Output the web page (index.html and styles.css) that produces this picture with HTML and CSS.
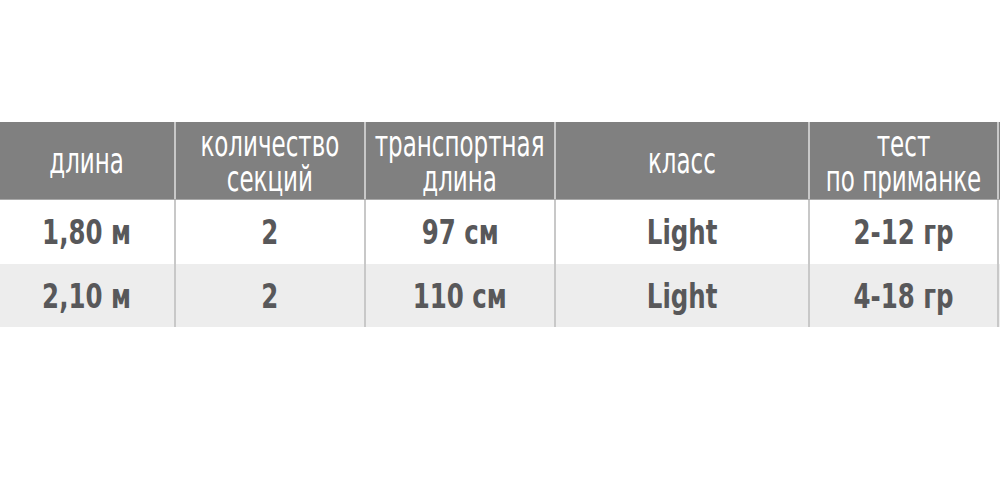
FILE: index.html
```html
<!DOCTYPE html>
<html lang="ru">
<head>
<meta charset="utf-8">
<link rel="stylesheet" href="styles.css">
</head>
<body>
<div class="page">
  <div class="table">
    <div class="row head">
      <div class="cell"><span class="t">длина</span></div>
      <div class="cell"><span class="t">количество<br>секций</span></div>
      <div class="cell"><span class="t">транспортная<br>длина</span></div>
      <div class="cell"><span class="t">класс</span></div>
      <div class="cell"><span class="t">тест<br>по приманке</span></div>
      <div class="cell"></div>
    </div>
    <div class="row body odd">
      <div class="cell"><span class="t">1,80 м</span></div>
      <div class="cell"><span class="t">2</span></div>
      <div class="cell"><span class="t">97 см</span></div>
      <div class="cell"><span class="t">Light</span></div>
      <div class="cell"><span class="t">2-12 гр</span></div>
      <div class="cell"></div>
    </div>
    <div class="row body even">
      <div class="cell"><span class="t">2,10 м</span></div>
      <div class="cell"><span class="t">2</span></div>
      <div class="cell"><span class="t">110 см</span></div>
      <div class="cell"><span class="t">Light</span></div>
      <div class="cell"><span class="t">4-18 гр</span></div>
      <div class="cell"></div>
    </div>
  </div>
</div>
</body>
</html>
```
FILE: styles.css
```css
html, body {
  margin: 0;
  padding: 0;
  background: #ffffff;
}
.page {
  width: 1000px;
  height: 490px;
  overflow: hidden;
  padding-top: 122px;
  box-sizing: border-box;
}
.table {
  width: 1000px;
  display: flex;
  flex-direction: column;
  font-family: "DejaVu Sans Condensed", "DejaVu Sans", sans-serif;
  font-stretch: condensed;
}
.row {
  display: grid;
  grid-template-columns: 174px 188px 188px 252px 187px 1fr;
  column-gap: 2px;
  background: #c8c8c8;
}
.cell {
  display: flex;
  align-items: center;
  justify-content: center;
  text-align: center;
}
.t {
  display: inline-block;
  transform-origin: center center;
}
.head {
  height: 78px;
  border-bottom: 1px solid #a9a9a9;
  box-sizing: border-box;
}
.head .cell {
  background: #808080;
  color: #ffffff;
}
.head .t {
  font-size: 36px;
  line-height: 35px;
  font-weight: normal;
  transform: scaleX(0.71);
  white-space: nowrap;
}
.body .t {
  font-size: 34px;
  line-height: 40px;
  font-weight: bold;
  color: #58585a;
  transform: scaleX(0.8);
  white-space: nowrap;
}
.odd {
  height: 64px;
}
.odd .cell {
  background: #ffffff;
}
.even {
  height: 63px;
}
.even .cell {
  background: #ededed;
}
```
